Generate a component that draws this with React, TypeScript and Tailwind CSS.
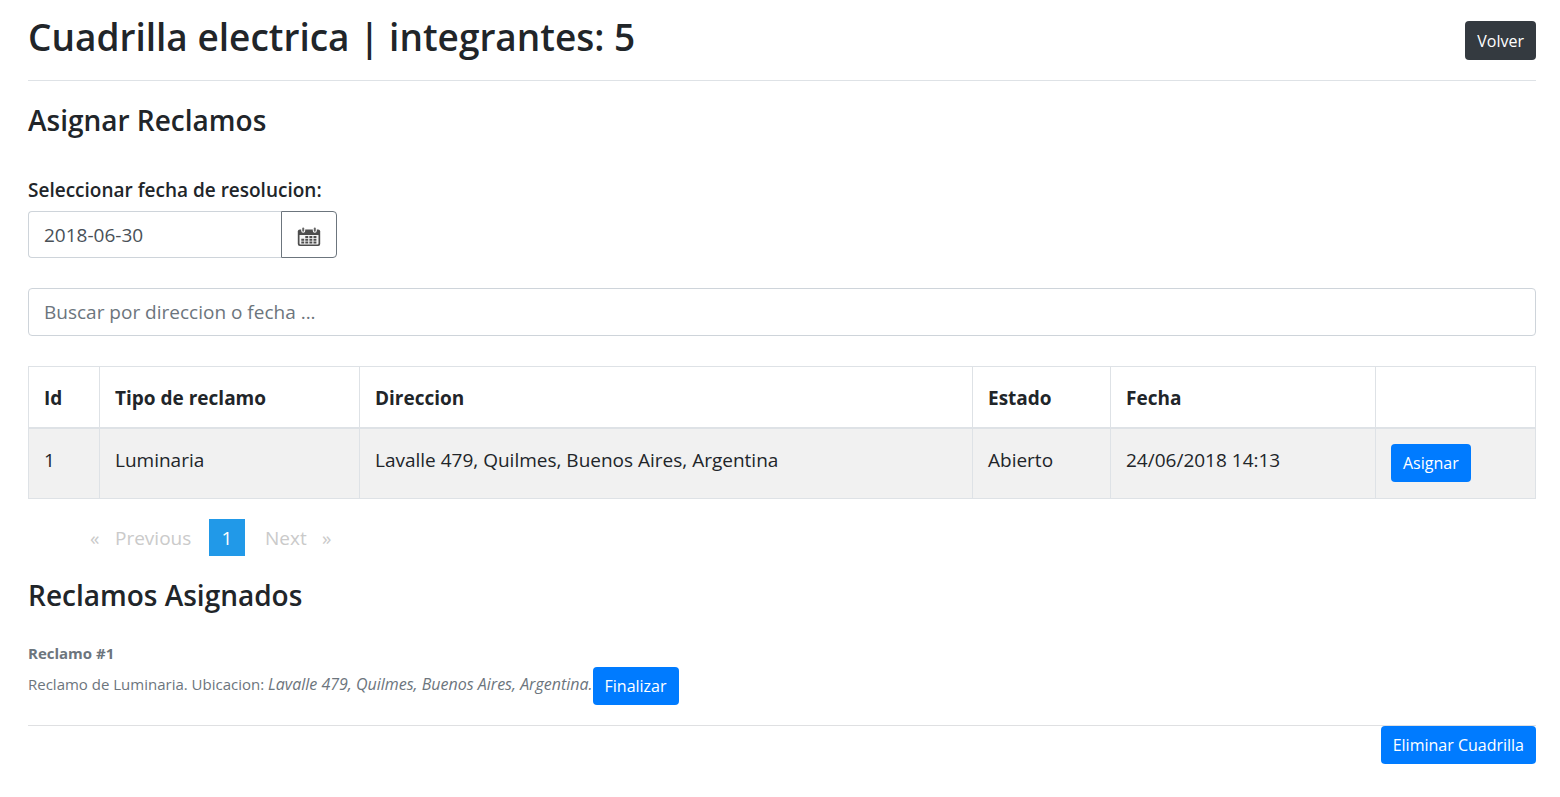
import { useState } from "react";

const reclamos = [
  {
    id: 1,
    tipo: "Luminaria",
    direccion: "Lavalle 479, Quilmes, Buenos Aires, Argentina",
    estado: "Abierto",
    fecha: "24/06/2018 14:13",
  },
];

const primaryButton =
  "rounded bg-[#007bff] px-3 h-[38px] text-base leading-[38px] text-white hover:bg-[#0069d9] cursor-pointer";
const headCell = "border border-[#dee2e6] border-b-2 px-[15px] pt-4 pb-[14px] text-left font-bold";
const bodyCell = "border border-[#dee2e6] px-[15px] py-4 align-top";

function CalendarIcon() {
  return (
    <svg width="24" height="20" viewBox="0 0 24 20" aria-hidden="true">
      <rect x="0.800" y="2.500" width="22.400" height="16.500" rx="2" fill="#4c4c4c" />
      <path fill="#f4f4f4" d="M2.500 8h19v8.500a1 1 0 0 1-1 1h-17a1 1 0 0 1-1-1Z" />
      <rect x="4.200" y="0" width="4" height="5.800" rx="2" fill="#fff" />
      <rect x="15.800" y="0" width="4" height="5.800" rx="2" fill="#fff" />
      <rect x="5.200" y="0.500" width="2" height="4.300" rx="1" fill="#666" />
      <rect x="16.800" y="0.500" width="2" height="4.300" rx="1" fill="#666" />
      <path
        fill="#4c4c4c"
        d="M8.300 9h2.900v2H8.300zM12.400 9h2.900v2h-2.900zM16.500 9h2.900v2h-2.900zM4.300 11.800h2.900v2H4.300zM8.300 11.800h2.900v2H8.300zM12.400 11.800h2.900v2h-2.900zM16.500 11.800h2.900v2h-2.900zM4.300 14.600h2.900v2H4.300zM8.300 14.600h2.900v2H8.300zM12.400 14.600h2.900v2h-2.900zM16.500 14.600h2.900v2h-2.900z"
      />
    </svg>
  );
}

export default function App() {
  const [fecha, setFecha] = useState("2018-06-30");
  const [busqueda, setBusqueda] = useState("");

  return (
    <main className="bg-white pr-6 pl-7 pb-8 font-['Open_Sans','Noto_Sans',sans-serif] text-[19px] leading-[30px] text-[#212529]">
      <header className="flex items-start justify-between border-b border-[#dee2e6] pt-3 pb-[18px]">
        <h1 className="text-[37px] leading-[50px] font-semibold">Cuadrilla electrica | integrantes: 5</h1>
        <button
          type="button"
          className="mt-[9px] h-[39px] cursor-pointer rounded bg-[#343a40] px-3 text-base text-white hover:bg-[#23272b]"
        >
          Volver
        </button>
      </header>

      <section>
        <h2 className="mt-5 text-[28px] leading-[38px] font-semibold">Asignar Reclamos</h2>

        <label htmlFor="fecha" className="mt-9 block font-semibold">
          Seleccionar fecha de resolucion:
        </label>
        <div className="mt-1.5 flex h-[47px]">
          <input
            id="fecha"
            type="text"
            value={fecha}
            onChange={(e) => setFecha(e.target.value)}
            className="w-[253px] rounded-l border border-r-0 border-[#ced4da] px-[15px] text-[#495057]"
          />
          <button
            type="button"
            aria-label="Abrir calendario"
            className="flex w-14 cursor-pointer items-center justify-center rounded-r border border-[#6c757d] pt-1"
          >
            <CalendarIcon />
          </button>
        </div>

        <input
          type="search"
          aria-label="Buscar por direccion o fecha"
          placeholder="Buscar por direccion o fecha ..."
          value={busqueda}
          onChange={(e) => setBusqueda(e.target.value)}
          className="mt-[30px] block h-12 w-full rounded border border-[#ced4da] px-[15px] text-[#495057] placeholder:text-[#6c757d]"
        />

        <table className="mt-[30px] w-full table-fixed border-collapse">
          <colgroup>
            <col className="w-[71px]" />
            <col className="w-[260px]" />
            <col />
            <col className="w-[138px]" />
            <col className="w-[265px]" />
            <col className="w-[160px]" />
          </colgroup>
          <thead>
            <tr>
              <th className={headCell}>Id</th>
              <th className={headCell}>Tipo de reclamo</th>
              <th className={headCell}>Direccion</th>
              <th className={headCell}>Estado</th>
              <th className={headCell}>Fecha</th>
              <td className={headCell}></td>
            </tr>
          </thead>
          <tbody>
            {reclamos.map((r) => (
              <tr key={r.id} className="bg-[#f1f1f1]">
                <td className={bodyCell}>{r.id}</td>
                <td className={bodyCell}>{r.tipo}</td>
                <td className={bodyCell}>{r.direccion}</td>
                <td className={bodyCell}>{r.estado}</td>
                <td className={bodyCell}>{r.fecha}</td>
                <td className="border border-[#dee2e6] px-[15px] pt-[15px] pb-4 align-top">
                  <button type="button" className={primaryButton + " block"}>
                    Asignar
                  </button>
                </td>
              </tr>
            ))}
          </tbody>
        </table>

        <nav aria-label="Paginas" className="mt-5 flex h-[37px] items-center pl-[62px] text-[#cacaca]">
          <span className="w-[25px]">«</span>
          <span className="w-[94px]">Previous</span>
          <span
            aria-current="page"
            className="flex h-[37px] w-9 items-center justify-center bg-[#2199e8] text-[#fefefe]"
          >
            1
          </span>
          <span className="w-[77px] pl-5">Next</span>
          <span>»</span>
        </nav>
      </section>

      <section>
        <h2 className="mt-5 text-[28px] leading-[38px] font-semibold">Reclamos Asignados</h2>
        <div className="mt-[26px] border-b border-[#dfe0e2] pb-5 text-[15px] text-[#6c757d]">
          <h3 className="leading-[27px] font-bold">Reclamo #1</h3>
          <div className="flex items-center">
            <p className="pb-1">
              Reclamo de Luminaria. Ubicacion:{" "}
              <em className="text-base">Lavalle 479, Quilmes, Buenos Aires, Argentina.</em>
            </p>
            <button type="button" className={primaryButton}>
              Finalizar
            </button>
          </div>
        </div>
        <div className="flex justify-end">
          <button type="button" className={primaryButton}>
            Eliminar Cuadrilla
          </button>
        </div>
      </section>
    </main>
  );
}
